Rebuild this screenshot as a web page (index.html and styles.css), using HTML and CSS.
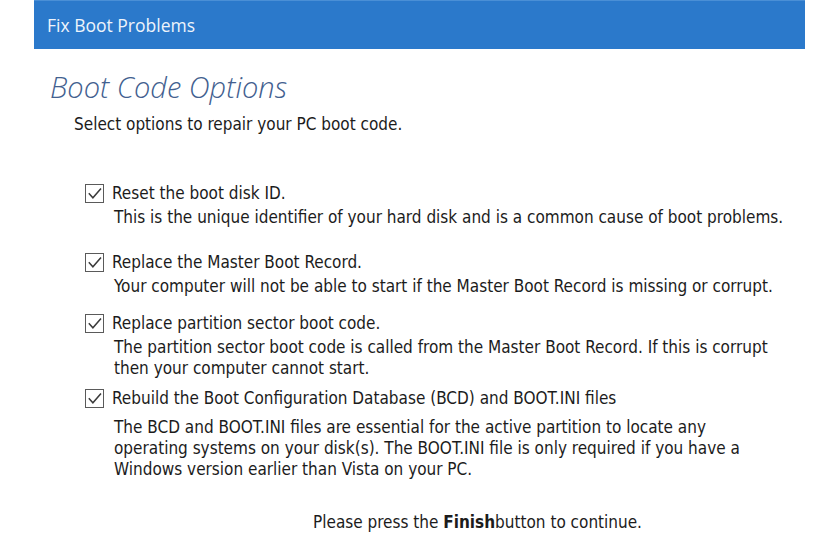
FILE: index.html
```html
<!DOCTYPE html>
<html lang="en">
<head>
    <meta charset="UTF-8">
    <title>Fix Boot Problems</title>
    <link rel="stylesheet" href="styles.css">
</head>
<body>
    <div class="titlebar">Fix Boot Problems</div>

    <div class="content">
        <h1>Boot Code Options</h1>
        <p class="intro">Select options to repair your PC boot code.</p>

        <div class="options">
            <div class="option disk-id">
                <label>
                    <svg class="check" width="19" height="19" viewBox="0 0 19 19"><rect x="0.5" y="0.5" width="18" height="18" fill="#fff" stroke="#5a5a5a"/><path d="M3.8 9.2 L7.9 13.8 L16 4.6" fill="none" stroke="#3a3a3a" stroke-width="1.5"/></svg>
                    Reset the boot disk ID.
                </label>
                <p class="desc">This is the unique identifier of your hard disk and is a common cause of boot problems.</p>
            </div>
            <div class="option mbr">
                <label>
                    <svg class="check" width="19" height="19" viewBox="0 0 19 19"><rect x="0.5" y="0.5" width="18" height="18" fill="#fff" stroke="#5a5a5a"/><path d="M3.8 9.2 L7.9 13.8 L16 4.6" fill="none" stroke="#3a3a3a" stroke-width="1.5"/></svg>
                    Replace the Master Boot Record.
                </label>
                <p class="desc">Your computer will not be able to start if the Master Boot Record is missing or corrupt.</p>
            </div>
            <div class="option sector">
                <label>
                    <svg class="check" width="19" height="19" viewBox="0 0 19 19"><rect x="0.5" y="0.5" width="18" height="18" fill="#fff" stroke="#5a5a5a"/><path d="M3.8 9.2 L7.9 13.8 L16 4.6" fill="none" stroke="#3a3a3a" stroke-width="1.5"/></svg>
                    Replace partition sector boot code.
                </label>
                <p class="desc">The partition sector boot code is called from the Master Boot Record. If this is corrupt<br>then your computer cannot start.</p>
            </div>
            <div class="option bcd">
                <label>
                    <svg class="check" width="19" height="19" viewBox="0 0 19 19"><rect x="0.5" y="0.5" width="18" height="18" fill="#fff" stroke="#5a5a5a"/><path d="M3.8 9.2 L7.9 13.8 L16 4.6" fill="none" stroke="#3a3a3a" stroke-width="1.5"/></svg>
                    Rebuild the Boot Configuration Database (BCD) and BOOT.INI files
                </label>
                <p class="desc">The BCD and BOOT.INI files are essential for the active partition to locate any<br>operating systems on your disk(s). The BOOT.INI file is only required if you have a<br>Windows version earlier than Vista on your PC.</p>
            </div>
        </div>

        <p class="finish">Please press the <b>Finish</b>button to continue.</p>
    </div>
</body>
</html>
```

FILE: styles.css
```css
body {
    margin: 0;
    background: #fff;
    color: #1c1c1c;
    font-family: "DejaVu Sans Condensed", "DejaVu Sans", sans-serif;
    font-size: 17px;
}

.titlebar {
    margin-left: 34px;
    width: 771px;
    height: 49px;
    box-sizing: border-box;
    padding: 12px 0 0 13px;
    background: #2b79cb;
    border-top: 1px solid #4a8fd6;
    color: #eef4fb;
    font-family: "Open Sans", sans-serif;
    font-size: 17.5px;
    line-height: 24px;
}

.content {
    padding-left: 50px;
}

h1 {
    margin: 21px 0 0;
    font-family: "Open Sans", sans-serif;
    font-weight: 300;
    font-style: italic;
    font-size: 29px;
    line-height: 34px;
    color: #42608f;
}

.intro {
    margin: 10px 0 0 24px;
    line-height: 21px;
}

.options {
    margin: 48px 0 0 35px;
}

.option label {
    display: flex;
    align-items: center;
    line-height: 21px;
}

.check {
    flex: none;
    margin-right: 8px;
}

.desc {
    margin: 3px 0 0 29px;
    line-height: 21px;
}

.option.mbr {
    margin-top: 24px;
}

.option.sector {
    margin-top: 16px;
}

.option.bcd {
    margin-top: 9px;
}

.option.bcd .desc {
    margin-top: 8px;
}

.finish {
    margin: 32px 0 0 263px;
    line-height: 21px;
}

.finish b {
    font-weight: bold;
}
```
